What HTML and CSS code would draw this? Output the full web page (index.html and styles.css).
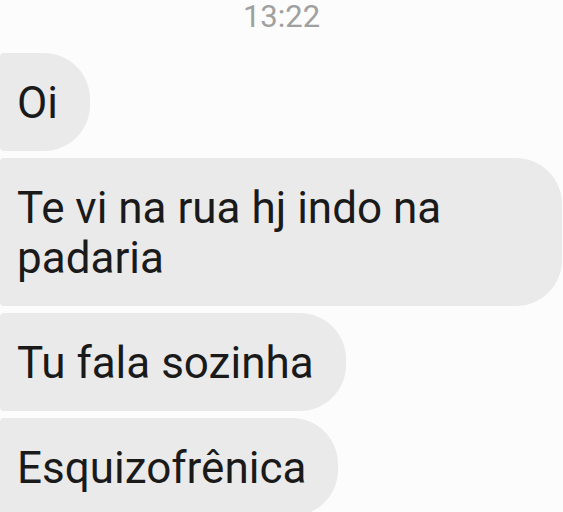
FILE: index.html
```html
<!DOCTYPE html>
<html>
    <head>
        <title>Conversa</title>
        <link rel="stylesheet" href="styles.css">
    </head>
    <body>
        <div class="chat">
            <div class="time">13:22</div>
            <div class="msg">Oi</div>
            <div class="msg">Te vi na rua hj indo na padaria</div>
            <div class="msg">Tu fala sozinha</div>
            <div class="msg">Esquizofrênica</div>
        </div>
    </body>
</html>
```

FILE: styles.css
```css
*{
    margin: 0;
    padding: 0;
    box-sizing: border-box;
}
body{
    background: #fcfcfc;
    font-family: Roboto, "Liberation Sans", sans-serif;
    overflow: hidden;
}
.chat{
    display: flex;
    flex-direction: column;
    align-items: flex-start;
    gap: 7px;
}
.time{
    align-self: stretch;
    text-align: center;
    font-size: 31px;
    line-height: 34px;
    height: 46px;
    color: #a0a0a0;
}
.msg{
    background: #eaeaea;
    color: #1a1a1a;
    font-size: 44px;
    line-height: 50px;
    padding: 25px 32px 23px 17px;
    max-width: 562px;
    border-radius: 4px 46px 46px 4px;
}
```
